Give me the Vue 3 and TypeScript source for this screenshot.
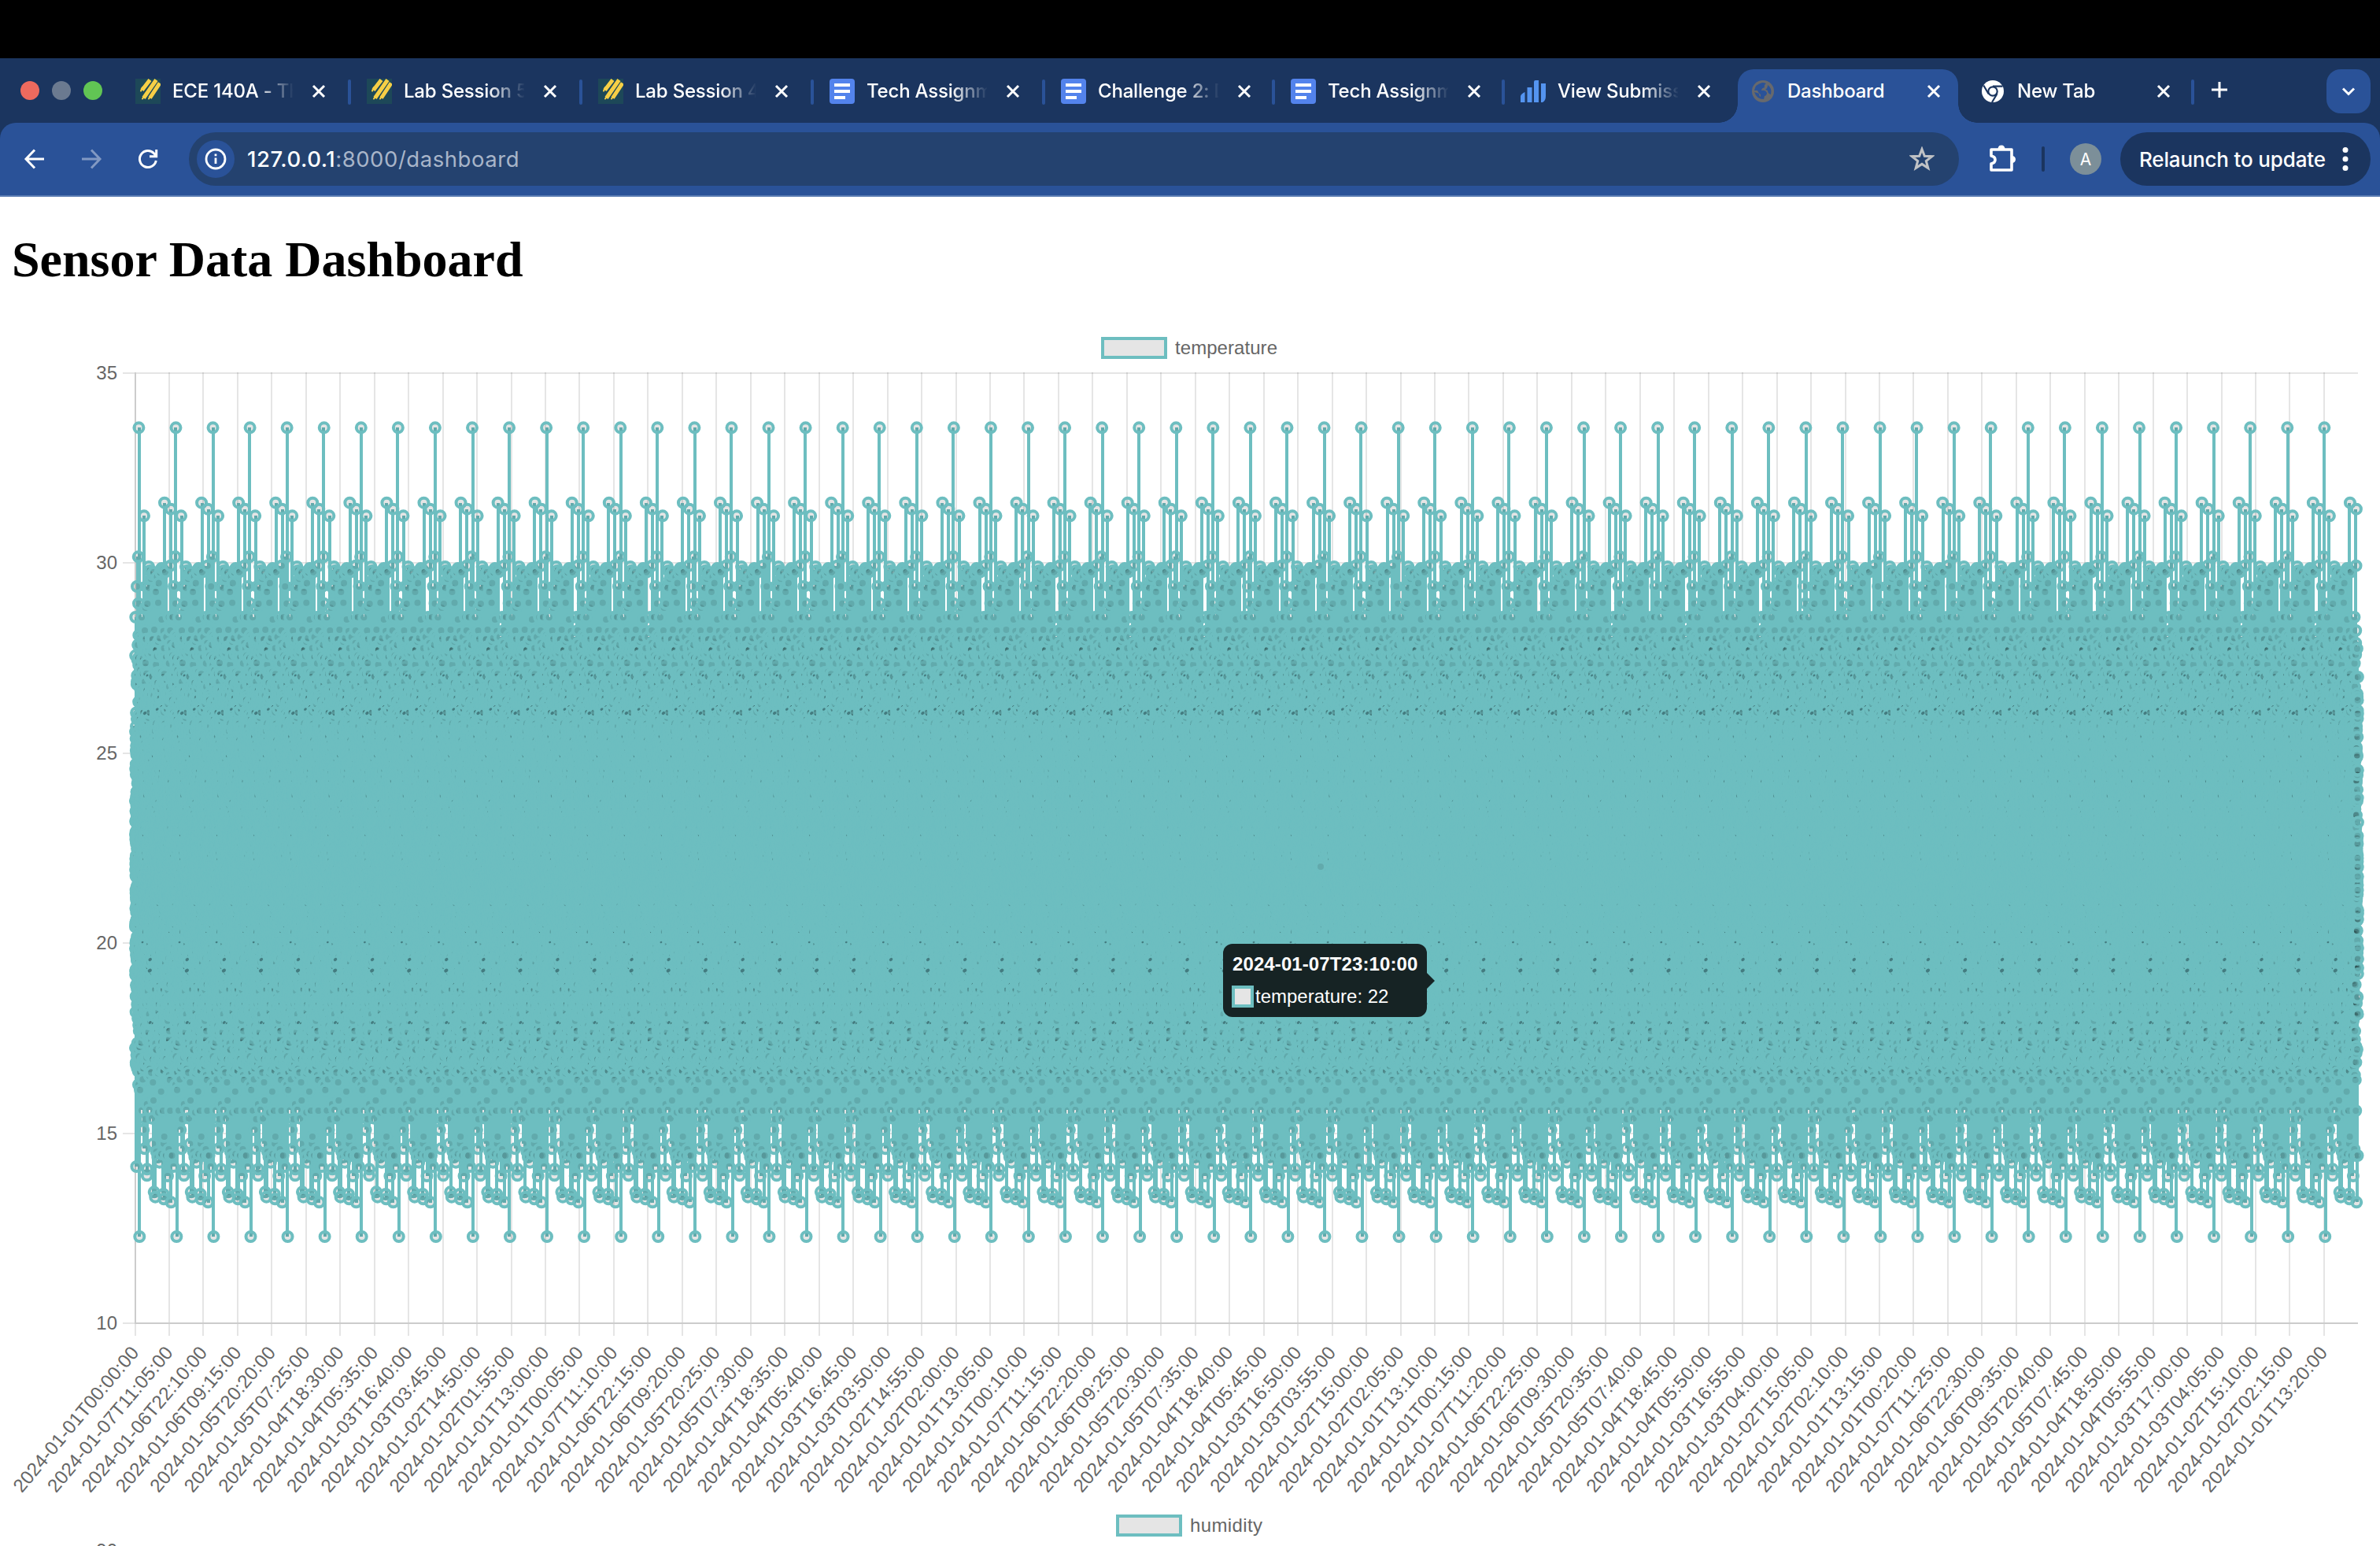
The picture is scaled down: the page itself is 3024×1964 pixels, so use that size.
<script setup lang="ts">
import { onMounted, ref } from 'vue'

interface Tab {
  title: string
  icon: 'course' | 'doc' | 'bars' | 'globe' | 'chrome'
  width: number
  divider: boolean
  active?: boolean
}

const tabs: Tab[] = [
  { title: 'ECE 140A - The Art of', icon: 'course', width: 294, divider: true },
  { title: 'Lab Session 5: Web', icon: 'course', width: 294, divider: true },
  { title: 'Lab Session 4: Data', icon: 'course', width: 294, divider: true },
  { title: 'Tech Assignment 5', icon: 'doc', width: 294, divider: true },
  { title: 'Challenge 2: Dash', icon: 'doc', width: 292, divider: true },
  { title: 'Tech Assignment 4', icon: 'doc', width: 292, divider: true },
  { title: 'View Submission', icon: 'bars', width: 292, divider: false },
  { title: 'Dashboard', icon: 'globe', width: 292, divider: false, active: true },
  { title: 'New Tab', icon: 'chrome', width: 292, divider: true },
]

// Plot geometry, relative to the top of the chart figure
const LEFT = 172
const RIGHT = 2996
const TOP = 74
const BOTTOM = 1281
const WEEKS = 60
const PER_WEEK = 2016

const pad = (n: number) => String(n).padStart(2, '0')

// Every 1861st five-minute sample is labelled; the log repeats each week
const xTicks = Array.from({ length: 65 }, (_, i) => {
  const m = (i * 1861 * 5) % 10080
  const day = Math.floor(m / 1440) + 1
  const label = `2024-01-${pad(day)}T${pad(Math.floor((m % 1440) / 60))}:${pad(m % 60)}:00`
  return { x: Math.round(171.5 + i * 43.46), tx: 171 + i * 43.45, label }
})
const yTicks = [35, 30, 25, 20, 15, 10].map((v) => ({
  v,
  y: Math.round(TOP + (35 - v) * ((BOTTOM - TOP) / 25)),
}))

// Readings outside the bulk of the week: [offset, y]
const highs: [number, number][] = [
  [4.4, 143.3], [11, 255.3], [3.7, 307.3], [17, 320], [2, 345], [4, 366.7], [37, 238.7], [45, 246.7],
  [44.6, 318.7], [0.3, 384], [38, 326.7], [29.7, 340.7], [20, 335.3], [29, 365.7], [17.3, 346.7],
  [26, 346.7], [33.3, 322], [23, 327], [8, 384.3], [12, 401], [24, 400], [35.7, 401.7], [44.3, 401],
  [19.7, 410.7], [44.3, 417], [25, 424], [10.3, 417], [15.3, 367], [12.7, 372], [33.3, 387],
  [18.5, 325], [21.5, 330], [27.5, 333], [31.5, 327], [35.5, 324], [26, 352], [13.8, 345],
  [42.5, 384],
]
const lows: [number, number][] = [
  [1.4, 1082], [5.3, 1171], [14.7, 1093.3], [14.9, 1085.3], [23.7, 1114.3], [25.3, 1120.7], [35.6, 1117],
  [36.3, 1123.3], [45.3, 1127.3], [41, 1094], [30.7, 1076.7], [44.3, 1068], [36.7, 1044], [36, 1052.7],
  [22.3, 1053.3], [11.7, 1059.3], [10.3, 1035.3], [26.7, 1063.3], [12.3, 1021.7], [21, 1020.7],
  [29, 1013.3], [44.3, 1011], [35, 1011], [8, 1010.7], [17.7, 1010], [14.7, 1002.7], [23, 998],
  [6, 984.7], [32.7, 986.7], [22.3, 975], [4, 978], [28.3, 1070], [33.2, 1066], [39, 1068], [42.4, 1060],
  [46.6, 1068],
]
const specks: [number, number, number][] = [
  [9, 797, 1.5], [18.7, 819, 2.4], [18.3, 833, 2.8], [18.7, 899, 2.2], [15, 458, 1.6], [27.7, 501, 2], [12, 506, 2.4],
]

function makeWeek(): [number, number][] {
  let s = 140
  const rnd = () => {
    s = (s * 1664525 + 1013904223) >>> 0
    return (s + 1) / 4294967297
  }
  const pts: [number, number][] = [...highs, ...lows]
  const step = (RIGHT - LEFT) / WEEKS / PER_WEEK
  for (let i = 0; i < PER_WEEK; i++) {
    let y = 0
    do {
      y = 701 + 148 * Math.sqrt(-2 * Math.log(rnd())) * Math.cos(2 * Math.PI * rnd())
    } while (y < 405 || y > 972)
    pts.push([i * step, y])
  }
  return pts.sort((a, b) => a[0] - b[0])
}

const plot = ref<HTMLCanvasElement | null>(null)

onMounted(() => {
  const ctx = plot.value?.getContext('2d')
  if (!ctx) return
  const week = makeWeek()
  const period = (RIGHT - LEFT) / WEEKS
  const teal = '#6dbec0'

  // Line: one vertical min/max stroke for each two-pixel column
  const cols = new Map<number, [number, number]>()
  for (let w = 0; w < WEEKS; w++) {
    for (const [dx, y] of week) {
      const c = Math.floor((LEFT + w * period + dx) / 2)
      const e = cols.get(c)
      if (!e) cols.set(c, [y, y])
      else {
        if (y < e[0]) e[0] = y
        if (y > e[1]) e[1] = y
      }
    }
  }
  ctx.fillStyle = teal
  cols.forEach(([a, b], c) => ctx.fillRect(2 * c - 1, Math.round(a), 4, Math.round(b - a)))

  // Point markers
  ctx.fillStyle = 'rgba(0,0,0,0.1)'
  ctx.strokeStyle = teal
  ctx.lineWidth = 4
  for (let w = 0; w < WEEKS; w++) {
    for (const [dx, y] of week) {
      ctx.beginPath()
      ctx.arc(LEFT + w * period + dx, y, 6, 0, Math.PI * 2)
      ctx.fill()
      ctx.stroke()
    }
  }
  ctx.fillStyle = 'rgba(35,70,75,0.55)'
  for (let w = 0; w < WEEKS; w++) {
    for (const [dx, y, r] of specks) {
      ctx.beginPath()
      ctx.ellipse(LEFT + w * period + dx, y, r, r * 0.75, -0.6, 0, Math.PI * 2)
      ctx.fill()
    }
  }
  // Hovered reading
  ctx.fillStyle = '#62aaac'
  ctx.beginPath()
  ctx.arc(1678, 701, 4, 0, Math.PI * 2)
  ctx.fill()
})
</script>

<template>
  <div class="screen">
    <div class="notch"></div>
    <header class="strip">
      <div class="lights"><i class="red"></i><i class="grey"></i><i class="green"></i></div>
      <div
        v-for="(t, i) in tabs"
        :key="i"
        class="tab"
        :class="{ active: t.active, divider: t.divider }"
        :style="{ width: t.width + 'px' }"
      >
        <svg class="fav" viewBox="0 0 32 32">
          <template v-if="t.icon === 'course'">
            <rect width="32" height="32" fill="#1d4858" />
            <path d="M8.500 14.500L18.500 1.500M10.500 24.500L26.500 1.500M18.500 24.500L31 5.500" stroke="#f6cf46" stroke-width="5" />
            <path d="M7 15.500L9 11M9 25.500L12 21M17 25.500L20 21" stroke="#f6cf46" stroke-width="2" stroke-linecap="round" />
          </template>
          <template v-else-if="t.icon === 'doc'">
            <rect width="32" height="32" rx="4" fill="#5383ec" />
            <path d="M6 8H26M6 16H26M6 24H20" stroke="#fff" stroke-width="4" />
          </template>
          <template v-else-if="t.icon === 'bars'">
            <path d="M0 30V22Q1 19 5.5 17V30ZM8.5 30V11H14.5V30ZM17 30V4Q17 2 19 2H23V30ZM26 30V6H32V22Q32 28 28 30Z" fill="#5494f0" />
          </template>
          <template v-else-if="t.icon === 'globe'">
            <circle cx="16" cy="16" r="14" fill="#67696d" />
            <path
              d="M15 5Q18 5 20 6Q17 8 18 11Q14 12 14 15Q19 14 21 18Q21 21 18 22L17 26Q8 26 5 17Q9 18 11 19Q11 22 13 23V20Q10 18 9 15H5Q6 7 15 5ZM22 8Q28 12 26 20Q22 19 22 15L19 14Q22 12 22 8Z"
              fill="#2a5298"
            />
          </template>
          <template v-else>
            <circle cx="16" cy="16" r="14" fill="#fff" />
            <circle cx="16" cy="16" r="5.7" fill="none" stroke="#1b355f" stroke-width="2.2" />
            <path d="M16 9.7H28.5M10.6 19.2L4.3 8.5M21.4 19.2L15 30" stroke="#1b355f" stroke-width="2.2" />
          </template>
        </svg>
        <span class="title">{{ t.title }}</span>
        <svg class="close" viewBox="0 0 20 20"><path d="M3 3L17 17M17 3L3 17" /></svg>
      </div>
      <svg class="plus" viewBox="0 0 24 24"><path d="M12 2V22M2 12H22" /></svg>
      <div class="menu"><svg viewBox="0 0 20 20"><path d="M3 6.5L10 13.5L17 6.5" /></svg></div>
    </header>

    <div class="toolbar-bg">
      <nav class="toolbar">
        <svg class="nav" viewBox="0 0 32 32"><path d="M28 16H5M16 4.500L5 16L16 27.500" /></svg>
        <svg class="nav dim" viewBox="0 0 32 32"><path d="M4 16H27M16 4.500L27 16L16 27.500" /></svg>
        <svg class="nav" viewBox="0 0 32 32"><path d="M26.300 18A10.500 10.500 0 1 1 23.500 8.700L26.500 12M26.700 4V12.700H18" /></svg>
        <div class="omnibox">
          <span class="info">
            <svg viewBox="0 0 32 32">
              <circle cx="16" cy="16" r="12" />
              <path d="M16 14.500V22" /><path d="M16 9.500V12.300" />
            </svg>
          </span>
          <span class="url"><b>127.0.0.1</b>:8000/dashboard</span>
          <svg class="star" viewBox="0 0 32 32">
            <path d="M16 3.500L19.300 12.300L28.600 12.700L21.300 18.500L23.800 27.600L16 22.400L8.200 27.600L10.700 18.500L3.400 12.700L12.700 12.300Z" />
          </svg>
        </div>
        <svg class="puzzle" viewBox="0 0 36 36">
          <path d="M4 8H30V34H4V26Q9 25 9 21Q9 17 4 16Z" />
          <path d="M12.500 8Q12.500 2.500 17 2.500Q21.500 2.500 21.500 8ZM30 15.500Q35 16.500 35 20.500Q35 24.500 30 25.500Z" class="solid" />
        </svg>
        <i class="bar"></i>
        <span class="avatar">A</span>
        <div class="relaunch">
          <span>Relaunch to update</span>
          <svg viewBox="0 0 8 32"><circle cx="4" cy="4.500" r="3.500" /><circle cx="4" cy="16" r="3.500" /><circle cx="4" cy="27.500" r="3.500" /></svg>
        </div>
      </nav>
    </div>

    <main>
      <h1>Sensor Data Dashboard</h1>
      <section class="chart">
        <svg class="layer" width="3024" height="1496" viewBox="0 0 3024 1496">
          <rect x="1401" y="30" width="80" height="24" class="key" />
          <text x="1493" y="50" textLength="130">temperature</text>
          <g class="grid">
            <path v-for="t in yTicks" :key="'y' + t.v" :d="`M156 ${t.y}H2996`" />
            <path v-for="t in xTicks" :key="'x' + t.x" :d="`M${t.x} 73V1297`" />
          </g>
          <path d="M172 73V1281M171 1281H2996" class="axis" />
          <text v-for="t in yTicks" :key="'l' + t.v" x="149" :y="t.y + 8" text-anchor="end">{{ t.v }}</text>
          <text
            v-for="t in xTicks"
            :key="'t' + t.x"
            :transform="`translate(${t.tx} 1313.500) rotate(-50)`"
            x="0"
            y="8.500"
            text-anchor="end"
            textLength="233"
          >{{ t.label }}</text>
        </svg>
        <canvas ref="plot" class="layer" width="3024" height="1496"></canvas>
        <div class="tooltip">
          <strong>2024-01-07T23:10:00</strong>
          <div class="row"><i></i><span>temperature: 22</span></div>
        </div>
      </section>
      <section class="chart second">
        <svg class="layer" width="3024" height="68" viewBox="0 0 3024 68">
          <rect x="1420" y="30" width="80" height="24" class="key" />
          <text x="1512" y="50" textLength="92">humidity</text>
          <text x="149" y="82" text-anchor="end">90</text>
        </svg>
      </section>
    </main>
  </div>
</template>

<style>
body {
  background: #fff;
  overflow: hidden;
}
</style>

<style scoped>
.screen {
  width: 3024px;
  height: 1964px;
  overflow: hidden;
  background: #fff;
  font-family: Inter, 'Liberation Sans', sans-serif;
}
svg {
  display: block;
  flex: none;
  fill: none;
}
.notch {
  height: 74px;
  background: #000;
}
.strip {
  display: flex;
  height: 82px;
  background: #1b355f;
}
.lights {
  display: flex;
  gap: 16px;
  width: 126px;
  padding: 29px 0 0 26px;
}
.lights i {
  width: 24px;
  height: 24px;
  border-radius: 50%;
}
.red { background: #ed6a5e; }
.grey { background: #6b7a90; }
.green { background: #61c554; }
.tab {
  position: relative;
  display: flex;
  box-sizing: border-box;
  height: 82px;
  padding: 26px 0 0 20px;
}
.fav {
  position: relative;
  width: 32px;
  height: 32px;
}
.title {
  position: relative;
  width: 153px;
  height: 32px;
  margin: 0 23px 0 15px;
  overflow: hidden;
  color: #fff;
  font-size: 24px;
  font-weight: 500;
  letter-spacing: -0.2px;
  line-height: 31px;
  white-space: nowrap;
  -webkit-mask-image: linear-gradient(90deg, #000 70%, transparent 101%);
  mask-image: linear-gradient(90deg, #000 70%, transparent 101%);
}
.active .title {
  -webkit-mask-image: none;
  mask-image: none;
}
.close {
  position: relative;
  width: 20px;
  height: 20px;
  margin-top: 6px;
  stroke: #fff;
  stroke-width: 3;
}
.divider::after {
  content: '';
  position: absolute;
  right: 0;
  top: 27px;
  width: 4px;
  height: 32px;
  border-radius: 2px;
  background: #2a5298;
}
.active::before {
  content: '';
  position: absolute;
  left: 4px;
  right: 8px;
  top: 14px;
  bottom: 0;
  border-radius: 20px 20px 0 0;
  background: #2a5298;
}
.active::after {
  content: '';
  position: absolute;
  left: -20px;
  right: -16px;
  bottom: 0;
  height: 24px;
  background:
    radial-gradient(circle at 0 0, transparent 23.5px, #2a5298 24px) left / 24px 24px no-repeat,
    radial-gradient(circle at 100% 0, transparent 23.5px, #2a5298 24px) right / 24px 24px no-repeat;
}
.plus {
  width: 24px;
  height: 24px;
  margin: 28px 0 0 20px;
  stroke: #fff;
  stroke-width: 3;
}
.menu {
  display: flex;
  align-items: center;
  justify-content: center;
  width: 56px;
  height: 56px;
  margin: 14px 12px 0 auto;
  border-radius: 18px;
  background: #2a5298;
}
.menu svg {
  width: 20px;
  stroke: #fff;
  stroke-width: 3;
}
.toolbar-bg {
  background: #1b355f;
}
.toolbar {
  display: flex;
  align-items: center;
  box-sizing: border-box;
  height: 94px;
  padding: 0 12px 0 28px;
  border-bottom: 2px solid #5a7cb2;
  border-radius: 20px 20px 0 0;
  background: #2a5298;
}
.nav {
  width: 32px;
  height: 32px;
  margin-right: 40px;
  stroke: #fff;
  stroke-width: 3;
}
.nav.dim {
  stroke: #8299c3;
}
.omnibox {
  display: flex;
  align-items: center;
  box-sizing: border-box;
  width: 2249px;
  height: 68px;
  margin-left: -4px;
  padding: 0 31px 0 10px;
  border-radius: 34px;
  background: #24426f;
}
.info {
  display: flex;
  align-items: center;
  justify-content: center;
  width: 48px;
  height: 48px;
  border-radius: 50%;
  background: #2a5298;
}
.info svg {
  width: 32px;
  stroke: #fff;
  stroke-width: 2.8;
}
.url {
  flex: 1;
  margin-left: 16px;
  color: #a8b5c9;
  font-size: 27.5px;
  letter-spacing: 0.55px;
}
.url b {
  color: #fff;
  font-weight: 500;
}
.star {
  width: 32px;
  height: 32px;
  stroke: #c0c2c5;
  stroke-width: 3;
}
.puzzle {
  width: 36px;
  height: 36px;
  margin-left: 37px;
  margin-top: -4px;
  stroke: #fff;
  stroke-width: 3.6;
  stroke-linejoin: round;
}
.puzzle .solid {
  fill: #fff;
  stroke: none;
}
.bar {
  width: 4px;
  height: 32px;
  margin-left: 32px;
  border-radius: 2px;
  background: #1b355f;
}
.avatar {
  width: 40px;
  height: 40px;
  margin-left: 32px;
  border-radius: 50%;
  background: #7c8f99;
  color: #fff;
  font-size: 21px;
  line-height: 41px;
  text-align: center;
}
.relaunch {
  display: flex;
  align-items: center;
  justify-content: space-between;
  box-sizing: border-box;
  width: 318px;
  height: 68px;
  margin-left: auto;
  padding: 0 28px 0 24px;
  border-radius: 34px;
  background: #1b355f;
  color: #fff;
  font-size: 26px;
  font-weight: 500;
  letter-spacing: -0.15px;
  white-space: nowrap;
}
.relaunch svg {
  width: 8px;
  fill: #fff;
}
h1 {
  box-sizing: border-box;
  height: 150px;
  margin: 0;
  padding: 43px 15px 0;
  color: #000;
  font: bold 64px/74px 'Liberation Serif', serif;
}
.chart {
  position: relative;
  display: grid;
  width: 3024px;
  height: 1496px;
}
.second {
  height: 68px;
  overflow: hidden;
}
.layer {
  display: block;
  grid-area: 1 / 1;
}
text {
  fill: #666;
  font: 24px 'Liberation Sans', sans-serif;
}
.key {
  fill: #e5e5e5;
  stroke: #6dbec0;
  stroke-width: 4;
}
.grid {
  stroke: rgba(0, 0, 0, 0.1);
  stroke-width: 2;
}
.axis {
  stroke: #ccc;
  stroke-width: 2;
}
.tooltip {
  position: absolute;
  left: 1554px;
  top: 799px;
  box-sizing: border-box;
  width: 259px;
  height: 93px;
  padding: 12px;
  border-radius: 12px;
  background: #162324;
  color: #fff;
  font: 24px/28px 'Liberation Sans', sans-serif;
  white-space: nowrap;
}
.tooltip::after {
  content: '';
  position: absolute;
  left: 100%;
  top: 37px;
  border: 10px solid transparent;
  border-left-color: #162324;
  border-right-width: 0;
}
.tooltip strong {
  display: block;
  letter-spacing: 0.1px;
}
.row {
  display: flex;
  align-items: center;
  margin-top: 13px;
}
.row i {
  box-sizing: border-box;
  width: 28px;
  height: 28px;
  margin: 0 2px 0 -1px;
  border: 4px solid #6dbec0;
  background: #e5e5e5;
}
</style>
